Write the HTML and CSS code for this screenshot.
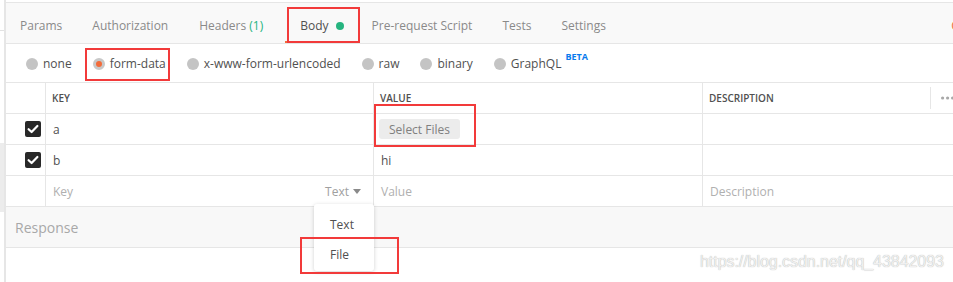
FILE: index.html
```html
<!DOCTYPE html>
<html lang="en">
<head>
<meta charset="utf-8">
<title>Postman Body form-data</title>
<link rel="stylesheet" href="styles.css">
</head>
<body>
<div class="app">
  <aside class="sidebar">
    <div class="sb-top"></div>
    <div class="sb-mid"></div>
    <div class="sb-gray"></div>
  </aside>
  <main class="main">
    <nav class="tabs">
      <span class="tab">Params</span>
      <span class="tab">Authorization</span>
      <span class="tab tab-headers">Headers&nbsp;<span class="count">(1)</span></span>
      <span class="tab active">Body<span class="dot"></span></span>
      <span class="tab">Pre-request Script</span>
      <span class="tab">Tests</span>
      <span class="tab">Settings</span>
      <span class="tab-links">Cookies</span>
    </nav>
    <div class="body-types">
      <label class="radio"><span class="circle"></span>none</label>
      <label class="radio"><span class="circle on"></span>form-data</label>
      <label class="radio"><span class="circle"></span>x-www-form-urlencoded</label>
      <label class="radio"><span class="circle"></span>raw</label>
      <label class="radio"><span class="circle"></span>binary</label>
      <label class="radio"><span class="circle"></span>GraphQL<sup class="beta">BETA</sup></label>
    </div>
    <div class="table">
      <div class="row head">
        <div class="cell check"></div>
        <div class="cell">KEY</div>
        <div class="cell">VALUE</div>
        <div class="cell desc-head">
          <span class="head-label">DESCRIPTION</span>
          <span class="head-sep"></span>
          <svg class="head-more" width="23" height="4" viewBox="0 0 23 4"><circle cx="1.6" cy="2" r="1.6" fill="#a8a8a8"/><circle cx="6.6" cy="2" r="1.6" fill="#a8a8a8"/><circle cx="11.6" cy="2" r="1.6" fill="#a8a8a8"/></svg>
        </div>
      </div>
      <div class="row">
        <div class="cell check"><span class="box"><svg width="16" height="16" viewBox="0 0 16 16"><path d="M3.6 8.2 L6.6 11 L12.4 5" fill="none" stroke="#fff" stroke-width="2.2" stroke-linecap="round" stroke-linejoin="round"/></svg></span></div>
        <div class="cell">a</div>
        <div class="cell"><span class="file-btn">Select Files</span></div>
        <div class="cell"></div>
      </div>
      <div class="row">
        <div class="cell check"><span class="box"><svg width="16" height="16" viewBox="0 0 16 16"><path d="M3.6 8.2 L6.6 11 L12.4 5" fill="none" stroke="#fff" stroke-width="2.2" stroke-linecap="round" stroke-linejoin="round"/></svg></span></div>
        <div class="cell">b</div>
        <div class="cell">hi</div>
        <div class="cell"></div>
      </div>
      <div class="row new">
        <div class="cell check"></div>
        <div class="cell key-new"><span class="ph">Key</span><span class="type">Text<svg width="8" height="5" viewBox="0 0 8 5"><path d="M0 0 H8 L4 5 Z" fill="#8a8a8a"/></svg></span></div>
        <div class="cell"><span class="ph">Value</span></div>
        <div class="cell"><span class="ph">Description</span></div>
      </div>
    </div>
    <div class="response">Response</div>
  </main>
</div>

<div class="menu">
  <div class="menu-item">Text</div>
  <div class="menu-item">File</div>
</div>

<div class="mark mark-body"></div>
<div class="mark mark-form"></div>
<div class="mark mark-select"></div>
<div class="mark mark-file"></div>

<div class="watermark">https://blog.csdn.net/qq_43842093</div>
</body>
</html>
```
FILE: styles.css
```css
* { box-sizing: border-box; }

html, body {
  margin: 0;
  padding: 0;
}

body {
  width: 953px;
  height: 282px;
  overflow: hidden;
  position: relative;
  background: #fff;
  font-family: "Open Sans", "Noto Sans", sans-serif;
  font-size: 12px;
  color: #505050;
}

.app {
  display: flex;
  height: 282px;
}

.sidebar {
  width: 6px;
  flex: none;
  border-right: 2px solid #e6e6e6;
  display: flex;
  flex-direction: column;
}
.sb-top { height: 31px; border-bottom: 1px solid #e2e2e2; }
.sb-mid { height: 112px; }
.sb-gray { height: 69px; background: #ececec; }

.main {
  flex: 1;
  min-width: 0;
  overflow: hidden;
  padding-top: 2px;
}

/* tabs */
.tabs {
  display: flex;
  height: 42px;
  border-top: 1px solid #e6e6e6;
  border-bottom: 1px solid #e6e6e6;
  background: #f9f9f9;
  padding-left: 0;
  overflow: hidden;
}
.tab {
  display: flex;
  align-items: center;
  padding: 6px 15px 0;
  border-bottom: 2px solid transparent;
  color: #8a8a8a;
  white-space: nowrap;
}
.tab:first-child { padding-left: 14px; }
.tab-headers { padding-left: 16px; margin-right: 7px; }
.tab.active {
  color: #505050;
  border-bottom-color: #f26b3a;
  padding-right: 13px;
}
.count { color: #26b47f; }
.dot {
  width: 8px;
  height: 8px;
  border-radius: 50%;
  background: #26b47f;
  margin-left: 7px;
  margin-top: 1px;
}
.tab-links {
  display: flex;
  align-items: center;
  padding-top: 6px;
  padding-bottom: 2px;
  margin-left: auto;
  margin-right: -42px;
  color: #f26b3a;
  white-space: nowrap;
}

/* body types */
.body-types {
  display: flex;
  align-items: center;
  height: 39px;
  border-bottom: 1px solid #e6e6e6;
  padding: 1px 0 0 20px;
}
.radio {
  display: flex;
  align-items: center;
  margin-right: 21px;
  color: #505050;
  white-space: nowrap;
}
.circle {
  width: 12px;
  height: 12px;
  border-radius: 50%;
  background: #c4c4c4;
  margin-right: 5px;
}
.circle.on {
  background: #f26b3a;
  border: 3px solid #c8c8c8;
}
.beta {
  font-size: 9px;
  font-weight: 700;
  color: #097bed;
  margin-left: 4px;
  align-self: flex-start;
  position: relative;
  top: -5px;
  vertical-align: baseline;
}

/* table */
.row {
  display: grid;
  grid-template-columns: 40px 328px 329px 261px;
  height: 31px;
  border-bottom: 1px solid #e6e6e6;
}
.cell {
  display: flex;
  align-items: center;
  padding-left: 7px;
  border-right: 1px solid #e6e6e6;
  white-space: nowrap;
  min-width: 0;
}
.cell:last-child { border-right: none; }
.head .cell {
  font-size: 10px;
  font-weight: 600;
  color: #505050;
  padding-left: 6px;
}
.cell.check {
  justify-content: flex-end;
  padding-left: 0;
  padding-right: 4px;
}
.box {
  width: 16px;
  height: 16px;
  border-radius: 2px;
  background: #282828;
  display: block;
}
.box svg { display: block; }

.desc-head { padding-right: 0; }
.head-label { flex: 1; }
.head-sep {
  width: 1px;
  height: 22px;
  background: #e6e6e6;
}
.head-more {
  margin-left: 10px;
  display: block;
}

.file-btn {
  display: inline-flex;
  align-items: center;
  justify-content: center;
  width: 81px;
  height: 20px;
  margin-left: -2px;
  border-radius: 3px;
  background: #ececec;
  color: #808080;
}

.ph { color: #b0b0b0; }
.key-new { justify-content: space-between; padding-right: 12px; }
.type {
  display: flex;
  align-items: center;
  color: #a0a0a0;
}
.type svg { margin-left: 4px; display: block; }

/* response */
.response {
  height: 41px;
  background: #f8f8f8;
  border-bottom: 1px solid #e6e6e6;
  display: flex;
  align-items: center;
  padding-left: 9px;
  font-size: 14px;
  color: #a8a8a8;
}

/* dropdown menu */
.menu {
  position: absolute;
  left: 314px;
  top: 204px;
  width: 60px;
  padding: 5px 0 2px;
  background: #fff;
  border-radius: 3px;
  box-shadow: 0 1px 4px rgba(0, 0, 0, 0.18);
}
.menu-item {
  height: 30px;
  display: flex;
  align-items: center;
  padding-left: 16px;
  color: #505050;
}

/* red annotation boxes */
.mark {
  position: absolute;
  border: 2px solid #f23a3a;
}
.mark-body { left: 287px; top: 7px; width: 73px; height: 36px; }
.mark-form { left: 85px; top: 48px; width: 85px; height: 33px; }
.mark-select { left: 374px; top: 104px; width: 102px; height: 43px; }
.mark-file { left: 300px; top: 237px; width: 99px; height: 37px; }

/* watermark */
.watermark {
  position: absolute;
  left: 700px;
  top: 253px;
  font-family: "Liberation Sans", Arial, sans-serif;
  font-size: 16px;
  letter-spacing: -0.05px;
  color: #f0f0f0;
  text-shadow: 0 0 1px #a6a6a6;
  white-space: nowrap;
}
```
